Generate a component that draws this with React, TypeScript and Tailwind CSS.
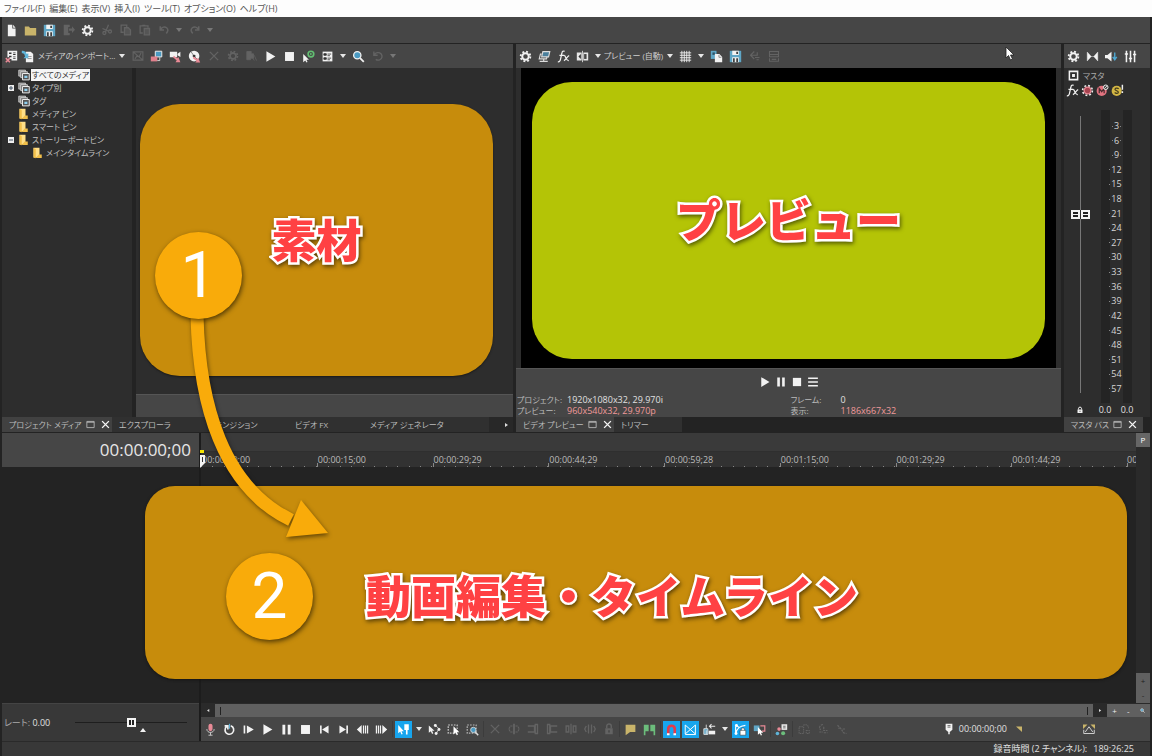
import { useState, type ReactNode } from "react";
import clsx from "clsx";

const ICONS: Record<string, ReactNode> = {
  file: <path d="M3.500 1H9v4.500h4V15H3.500zM10 1l3 3.500h-3z" fill="currentColor" />,
  folderOpen: <path d="M1 3h5l1.500 2H15v9H1z" fill="#c9b46a" />,
  save: (
    <>
      <path d="M1 1h14v14H1z" fill="#5fa6c6" />
      <path d="M4 1h8v5H4zM4 9h8v6H4z" fill="#f2f2f2" />
      <path d="M9 2h2v3H9zM5 10h2v5H5zM9 10h2v5H9z" fill="#333" />
    </>
  ),
  render: <path d="M1 1h8v3H7v8h2v3H1zM8 6h4V3l4 4.500-4 4.500V9H8z" fill="currentColor" />,
  gear: (
    <g fill="none" stroke="currentColor">
      <circle cx="8" cy="8" r="4" strokeWidth="2.400" />
      <circle cx="8" cy="8" r="6" strokeWidth="2.200" strokeDasharray="2.350 2.362" />
    </g>
  ),
  cut: (
    <g fill="none" stroke="currentColor" strokeWidth="1.700">
      <circle cx="4.500" cy="12" r="2" />
      <circle cx="12" cy="10" r="2" />
      <path d="M10 1 6 10.500M2 6l8 3.500" />
    </g>
  ),
  copy: (
    <g fill="none" stroke="currentColor" strokeWidth="1.700">
      <path d="M5 11H1.500V1.500H9V4" />
      <path d="M6 5h5l3 3v6.500H6z" fill="currentColor" fillOpacity=".5" />
    </g>
  ),
  paste: (
    <g fill="none" stroke="currentColor" strokeWidth="1.700">
      <path d="M5 12H1.500V2.500H12V5M4.500 2h4" />
      <path d="M7 6h7v8.500H7z" fill="currentColor" fillOpacity=".5" />
    </g>
  ),
  undo: <path d="M3 3v5h5M3.500 7.500C5 4 9 3 11.500 5c2.500 2 2 5-.500 7.500" fill="none" stroke="currentColor" strokeWidth="2" />,
  redo: <path d="M13 3v5H8M12.500 7.500C11 4 7 3 4.500 5c-2.500 2-2 5 .500 7.500" fill="none" stroke="currentColor" strokeWidth="2" />,
  rotate: <path d="M2.500 2v5h5M3 6.500C5 3 9.500 2.500 12 5c2.500 3 1.500 6.500-1.500 8-2 1-4 .500-5.500-.500" fill="none" stroke="currentColor" strokeWidth="1.800" />,
  binGrid: (
    <>
      <path d="M3 1h12v12H8v-2H6V9H3z" fill="#f2f2f2" />
      <path d="M5 3h3v2H5zM10 3h3v1h-3zM10 5h3v1h-3zM5 7h3v2H5zM10 8h3v1h-3zM10 10h3v1h-3z" fill="#333" />
      <path d="m1 10 5 5M6 10l-5 5" stroke="#e98a96" strokeWidth="1.800" />
    </>
  ),
  importMedia: (
    <>
      <path d="M6 2h6l3 3v10H6z" fill="#f2f2f2" />
      <path d="M8 8h5M8 10.500h5" stroke="#888" />
      <path d="M1 1c4 0 5 1 6 4l2-1v6H3l2-2C4 4 3 4 1 4z" fill="#5fb4d8" />
    </>
  ),
  noImage: <path d="M1.500 2.500h13v11h-13zM1.500 2.500l13 11M4 12l3-5M9 10l3-6" fill="none" stroke="currentColor" strokeWidth="1.500" />,
  capture: (
    <>
      <path d="M6.500 1.500h8v7h-8z" fill="#4a9ac2" stroke="#eee" strokeWidth="1.200" />
      <path d="M1 8h8v6H1z" fill="#e0808c" />
      <path d="M12 9v4h-3" fill="none" stroke="#eee" />
    </>
  ),
  camera: (
    <>
      <path d="M1 2h9v7H1zM10.500 4.500 14 2v6.500l-3.500-2z" fill="#f2f2f2" />
      <path d="m6 7 4 3 1.500-1.500L14 15H8l1.500-2L5 9z" fill="#e98a96" />
    </>
  ),
  disc: (
    <>
      <circle cx="7.500" cy="7.500" r="6.500" fill="#f2f2f2" />
      <path d="M7.500 7.500 4 2.500M7.500 7.500 12 12" stroke="#666" />
      <circle cx="7.500" cy="7.500" r="1.800" fill="#333" />
      <path d="m7 8 4 3 1.500-1.500L15 15.500H9l1.500-2L6 10z" fill="#e98a96" />
    </>
  ),
  x: <path d="m2.500 2.500 11 11M13.500 2.500l-11 11" stroke="currentColor" strokeWidth="1.800" />,
  bin: <path d="M1 2h6v3h3v6H6v2H1zM8 9l3 5M11 7l3 7" fill="currentColor" stroke="currentColor" />,
  play: <path d="M3 1.500 14 8 3 14.500z" fill="currentColor" />,
  stop: <path d="M2.500 2.500h11v11h-11z" fill="currentColor" />,
  pause: <path d="M3 2h3.500v12H3zM9.500 2H13v12H9.500z" fill="currentColor" />,
  autoPreview: (
    <>
      <path d="M1.500 5v10l2.500-2.200L5.500 15.500l1.300-.800L5.500 12h3z" fill="#f2f2f2" />
      <circle cx="11" cy="5" r="3.500" fill="none" stroke="#62bf72" strokeWidth="2" />
      <path d="m10 3.500 3 1.500-3 1.500z" fill="#62bf72" />
    </>
  ),
  views: (
    <>
      <path d="M2 2h12v12H2z" fill="#f2f2f2" />
      <path d="M3.500 4.500h3v2h-3zM8 5h4.500M8 7h3M3.500 9.500h3v2h-3zM8 10h4.500M8 12h3" fill="#333" stroke="#333" />
    </>
  ),
  search: (
    <>
      <path d="m10 10 4.500 4.500" stroke="#f2f2f2" strokeWidth="2.200" />
      <circle cx="6.500" cy="6.500" r="4.500" fill="#4a9ac2" stroke="#f2f2f2" strokeWidth="1.600" />
    </>
  ),
  external: (
    <g fill="none" stroke="#dcdcdc" strokeWidth="1.400">
      <path d="M6 2h8.500L13 8.500H4.500z" fill="#4a7f9c" />
      <path d="M4.500 5H3l-1.500 6h9l.500-2.500M2 14h10M7 11v3" />
    </g>
  ),
  fx: <path d="M1 14.500c2 .500 3-1 3.500-4L6 4c.500-2.500 1.500-3 3.500-2.500M3 6.500h6M9 7c2 0 2 6.500 5.500 6M15 7c-2 .500-4 5-6.500 6" fill="none" stroke="currentColor" strokeWidth="1.500" />,
  split: (
    <>
      <path d="M1 3h6v10H1zM9 3h6v10H9z" fill="#e6e6e6" />
      <path d="M6 5 3 8l3 3z" fill="#333" />
      <path d="M10 5v6h3V5z" fill="#444" />
      <path d="M8 1v14" stroke="#e6e6e6" />
    </>
  ),
  grid: <path d="M3.500 1v14M6.500 1v14M9.500 1v14M12.500 1v14M1 3.500h14M1 6.500h14M1 9.500h14M1 12.500h14" stroke="currentColor" strokeWidth="1.100" />,
  snapshot: (
    <>
      <path d="M1 1h7v10H1z" fill="#5fa6c6" />
      <path d="M3 3h3v3H3z" fill="#2f5366" />
      <path d="M6 5h5.500L15 8.500V15H6z" fill="#f2f2f2" />
      <path d="M11 6v3h3" fill="none" stroke="#777" />
    </>
  ),
  dimArrow: <path d="M7 2 2 7l5 5M3 7h8V3M8 10h6M10 13h3" fill="none" stroke="currentColor" strokeWidth="1.500" />,
  dimBox: <path d="M2 2h12v7H2zM2 6h12M2 11v4h12v-4M5 12.500h6" fill="none" stroke="currentColor" strokeWidth="1.400" />,
  lines: <path d="M1.500 3h13M1.500 8h13M1.500 13h13" stroke="currentColor" strokeWidth="2" />,
  downmix: <path d="M1.500 2.500l5 5.500-5 5.500zM14.500 2.500 9.500 8l5 5.500zM5 8h6" fill="currentColor" stroke="currentColor" strokeWidth=".5" />,
  dim: (
    <>
      <path d="M0 6h3l5-4v12l-5-4H0z" fill="#f2f2f2" />
      <path d="M12 3v8M9.500 8.500 12 12l2.500-3.500" fill="none" stroke="#4fa8d2" strokeWidth="1.700" />
    </>
  ),
  mixer: <path d="M3 1v14M8 1v14M13 1v14M1 5h4M6 10.500h4M11 5.500h4" stroke="currentColor" strokeWidth="1.900" />,
  target: <path d="M2 2h12v12H2zM7 7h2v2H7z" fill="none" stroke="currentColor" strokeWidth="2.200" />,
  autoRed: (
    <>
      <circle cx="8" cy="8" r="6" fill="none" stroke="#eee" strokeWidth="2" strokeDasharray="2.350 2.362" />
      <circle cx="8" cy="8" r="4.200" fill="#a84450" stroke="#e98a96" strokeWidth="1.500" />
    </>
  ),
  mute: (
    <>
      <circle cx="7" cy="8.500" r="6.200" fill="#e27480" />
      <path d="M4 11.500v-6l3 4 3-4v6" fill="none" stroke="#4a2b2e" strokeWidth="1.500" />
      <circle cx="12" cy="4" r="2.800" fill="#444" stroke="#eee" strokeWidth="1.200" />
      <path d="m10.500 5.500 3-3" stroke="#eee" />
    </>
  ),
  solo: (
    <>
      <circle cx="7" cy="8.500" r="6.200" fill="#d2b544" />
      <path d="M9.500 6C8 4.500 4.500 5 5 7c.300 1.500 4 1.200 4 3s-3 2-4.500.500" fill="none" stroke="#443c1c" strokeWidth="1.500" />
      <path d="M14 1v6M14 9v2" stroke="#eee" strokeWidth="1.800" />
    </>
  ),
  mic: (
    <>
      <rect x="5.500" y="1" width="5" height="9" rx="2.500" fill="#e98a96" />
      <path d="M3.500 7.500c0 5.500 9 5.500 9 0M8 11.500V15M5.500 15h5" fill="none" stroke="#c9c9c9" strokeWidth="1.200" />
    </>
  ),
  loop: (
    <>
      <path d="M5 4c-3.500 2-3.500 8 1 9.500 4.500 1.500 8-2.500 7-6.500C12.500 5 11 4 9.500 3.500M2 3.500h4V8" fill="none" stroke="#f2f2f2" strokeWidth="2" />
      <path d="M8 1v6" stroke="#5fb4d8" strokeWidth="1.500" />
    </>
  ),
  playStart: <path d="M2 3h2v10H2zM6 3 14.500 8 6 13z" fill="currentColor" />,
  prev: <path d="M2.500 3h2v10h-2zM13 3v10L5 8z" fill="currentColor" />,
  next: <path d="M11.500 3h2v10h-2zM3 3v10l8-5z" fill="currentColor" />,
  frameBack: <path d="M7 2.500v11L1 8zM8.500 3H10v10H8.500zM11 3h1.500v10H11zM13.500 3H15v10h-1.500z" fill="currentColor" />,
  frameNext: <path d="M9 2.500v11L15 8zM6 3h1.500v10H6zM3.500 3H5v10H3.500zM1 3h1.500v10H1z" fill="currentColor" />,
  editTool: (
    <>
      <path d="M1.500 2.500v10l2.500-2 1.500 3.500 1.500-.500-1.500-3.500H8.500z" fill="#fff" />
      <path d="M9 1.500h5.500v7H13V14h-2V8.500H9z" fill="#fff" />
    </>
  ),
  envelope: (
    <>
      <path d="M1 3v9l2.500-2L5 13.500l1.500-.800L5 9.500h3z" fill="#f2f2f2" />
      <path d="m9 3 4.500 4-3.500 6" fill="none" stroke="#ddd" />
      <circle cx="9" cy="3" r="1.800" fill="#f2f2f2" />
      <circle cx="13.500" cy="8" r="1.800" fill="#f2f2f2" />
      <circle cx="10" cy="13" r="1.800" fill="#f2f2f2" />
    </>
  ),
  selection: (
    <>
      <path d="M1.500 2.500h11v10h-11z" fill="none" stroke="#d0d0d0" strokeWidth="1.400" strokeDasharray="2 1.500" />
      <path d="M8 4v10l2.500-2.200L12 15l1.500-.700-1.400-3h3z" fill="#fff" />
    </>
  ),
  zoomTool: (
    <>
      <path d="M1.500 2.500h11v10h-11z" fill="none" stroke="#b8b8b8" strokeWidth="1.400" strokeDasharray="2 1.500" />
      <circle cx="9" cy="8.500" r="3.300" fill="#4a9ac2" stroke="#ddd" />
      <path d="m11.500 11 3.500 4" stroke="#ddd" strokeWidth="1.800" />
    </>
  ),
  trim: (
    <>
      <path d="M6 4H3L1 8l2 4h3M10 4h3l2 4-2 4h-3" fill="none" stroke="currentColor" strokeWidth="1.500" strokeDasharray="3 1" />
      <path d="M8 1v14" stroke="currentColor" strokeWidth="2.500" />
    </>
  ),
  trimStart: <path d="M1 4h9v8H1M11 2h3v12h-3z" fill="none" stroke="currentColor" strokeWidth="1.800" />,
  trimEnd: <path d="M15 4H6v8h9M2 2h3v12H2z" fill="none" stroke="currentColor" strokeWidth="1.800" />,
  splitDim: <path d="M8 1v14M5 4H1.500v8H5zM11 4h3.500v8H11z" fill="none" stroke="currentColor" strokeWidth="1.800" />,
  slip: <path d="M6 2v12M10 2v12M3 4 1 8l2 4M13 4l2 4-2 4" fill="none" stroke="currentColor" strokeWidth="1.800" />,
  lock: (
    <>
      <path d="M5 7V4c0-3.500 6-3.500 6 0v3" fill="none" stroke="currentColor" strokeWidth="1.900" />
      <path d="M3 7h10v8H3z" fill="currentColor" />
      <path d="M8 9.500v3" stroke="#464646" strokeWidth="2" />
    </>
  ),
  lockFull: (
    <>
      <path d="M5 7V4.500c0-3 6-3 6 0V7" fill="none" stroke="#f2f2f2" strokeWidth="2" />
      <path d="M3 7h10v7H3z" fill="#f2f2f2" />
      <path d="M8 9.500v2.500" stroke="#333" strokeWidth="1.500" />
    </>
  ),
  marker: <path d="M2 2h12v9H7.500L2 15z" fill="#c9b46a" />,
  region: <path d="M1 2h6v8H3v5H1zM9 2h6v13h-2v-5H9z" fill="#6cbd7c" />,
  magnet: (
    <>
      <path d="M4 14V7.500c0-5.500 8-5.500 8 0V14" fill="none" stroke="#e23b4a" strokeWidth="3.200" />
      <path d="M2.400 12.500h3.200V15H2.400zM10.400 12.500h3.200V15h-3.200z" fill="#fff" />
    </>
  ),
  crossfade: <path d="M1.500 2.500v11L14 2.500v11L1.500 2.500M1.500 14.200h13" fill="none" stroke="#fff" strokeWidth="1.200" />,
  ripple: (
    <>
      <path d="M4 2v5M4 9v5M1 7h5v7H1z" fill="#5fa6c6" stroke="#eee" />
      <path d="M7 9.500h8V14H7z" fill="#f2f2f2" />
      <path d="M15 4H8M10.500 1.500 8 4l2.500 2.500" fill="none" stroke="#eee" strokeWidth="1.300" />
    </>
  ),
  lockEnv: (
    <>
      <path d="M2 13C4 6 7 4 14 3M3 3l4 3M2 4v9" fill="none" stroke="#fff" strokeWidth="1.400" />
      <circle cx="3" cy="3" r="1.800" fill="#fff" />
      <circle cx="2.500" cy="13" r="1.800" fill="#fff" />
      <path d="M7.500 9h7v6h-7zM9 9V7.500c0-2 4-2 4 0V9" fill="#fff" stroke="#333" strokeWidth=".7" />
    </>
  ),
  ignoreGroup: (
    <>
      <path d="M1 3h7v7H1z" fill="#5fa6c6" />
      <path d="M9 3.500h5.500V10H11" fill="none" stroke="#e98a96" strokeWidth="1.500" />
      <path d="M6 5v9.500l2.300-2L9.700 15.500l1.400-.700-1.300-2.800h2.700z" fill="#fff" />
    </>
  ),
  nodes: (
    <>
      <path d="M8 1.500h7v7H8z" fill="#e6e6e6" />
      <path d="M10 4h3M10 6h3" stroke="#555" />
      <circle cx="5" cy="7.500" r="2.200" fill="#e98a96" />
      <circle cx="3" cy="13" r="2.200" fill="#5fb4d8" />
      <circle cx="10" cy="12.500" r="2.500" fill="#6cbd7c" />
    </>
  ),
  dashed: <path d="M1.500 5h6v9h-6zM7 3c4-2 7 0 7 4M11 10h4v4h-4z" fill="none" stroke="currentColor" strokeWidth="1.400" strokeDasharray="2 1" />,
  dashed2: <path d="M8 2C3 3 2 7 5 9M3 12h5M9 5v5h5M9 13h5" fill="none" stroke="currentColor" strokeWidth="1.600" strokeDasharray="3 1" />,
  dashed3: <path d="m2 3 5 5 3 5 4 1M3 7h4M9 8h4" fill="none" stroke="currentColor" strokeWidth="1.600" strokeDasharray="3 1" />,
  cursorMark: (
    <>
      <path d="M3.500 1h9v8L9 12v3H7v-3L3.500 9z" fill="#f2f2f2" />
      <path d="M6 3.500h4M6 5.500h4" stroke="#444" />
    </>
  ),
  corner: <path d="M2 3h12v11z" fill="#c9b46a" />,
  cornerPair: (
    <>
      <path d="M0 2h6L0 8zM10 2h6v6z" fill="#c9b46a" />
      <path d="M1 9v5h14V9M3 12l5-7 5 7" fill="none" stroke="#ddd" strokeWidth="1.200" />
    </>
  ),
  mediaStack: (
    <>
      <path d="M1 1.500h9v8H1z" fill="#888" stroke="#ddd" />
      <path d="M3.500 3.500h9v8h-9z" fill="#777" stroke="#ddd" />
      <path d="M6 6h9v8.500H6z" fill="#555" stroke="#eee" strokeWidth="1.300" />
      <path d="M8.500 9h4v3h-4z" fill="#8fd0f0" />
    </>
  ),
  bookFolder: (
    <>
      <path d="M2 1h8v13H2z" fill="#ffdf88" />
      <path d="M2 1l3 2v12l-3-1zM9 10h4v4.500H5z" fill="#f1bf4a" />
    </>
  ),
  maximize: <path d="M1.500 2.500h13v11h-13zM1.500 4h13" fill="none" stroke="currentColor" strokeWidth="1.500" />,
  close: <path d="m2 2 12 12M14 2 2 14" stroke="#f5f5f5" strokeWidth="2.500" />,
};

function Icon({ name, className = "size-[14px]" }: { name: string; className?: string }) {
  return (
    <svg viewBox="0 0 16 16" className={clsx("shrink-0", className)} aria-hidden="true">
      {ICONS[name]}
    </svg>
  );
}

function Tool({ name, off, on }: { name: string; off?: boolean; on?: boolean }) {
  return (
    <button
      type="button"
      aria-label={name}
      disabled={off}
      className={clsx(
        "grid h-[19px] w-[19px] shrink-0 place-items-center",
        off ? "text-[#636363]" : "text-[#f2f2f2]",
        on && "border border-[#464646] bg-[#17a5ee]",
      )}
    >
      <Icon name={name} className={off ? "size-3" : "size-[13px]"} />
    </button>
  );
}

function Drop({ off }: { off?: boolean }) {
  return (
    <button type="button" aria-label="more" className="grid h-[19px] w-3 shrink-0 place-items-center">
      <svg viewBox="0 0 6 4" className={clsx("h-1 w-1.5", off ? "text-[#777]" : "text-[#e6e6e6]")}>
        <path d="M0 0h6L3 4z" fill="currentColor" />
      </svg>
    </button>
  );
}

// Toolbar entries: "-" is a dropdown arrow, "|" a separator, "!" dims, "*" highlights.
function Tools({ items }: { items: string[] }) {
  return (
    <>
      {items.map((item, i) => {
        if (item === "-") return <Drop key={i} />;
        if (item === "!-") return <Drop key={i} off />;
        if (item === "|") return <span key={i} className="flex h-4 w-[3px] shrink-0 justify-center"><span className="w-px bg-[#3c3c3c]" /></span>;
        if (item[0] === "!") return <Tool key={i} name={item.slice(1)} off />;
        if (item[0] === "*") return <Tool key={i} name={item.slice(1)} on />;
        return <Tool key={i} name={item} />;
      })}
    </>
  );
}

function Tab({ label, active, className }: { label: string; active?: boolean; className: string }) {
  return (
    <div className={clsx("flex h-full shrink-0 items-center gap-0.5 pl-[7px] text-[#bbb]", active ? "bg-[#414141]" : "bg-[#303030]", className)}>
      <button type="button" role="tab" aria-selected={!!active} className="whitespace-nowrap text-[8px]">
        {label}
      </button>
      {active && (
        <>
          <button type="button" aria-label="maximize" className="px-0.5"><Icon name="maximize" className="size-[9px]" /></button>
          <button type="button" aria-label="close" className="px-0.5"><Icon name="close" className="size-[9px]" /></button>
        </>
      )}
    </div>
  );
}

const CAPTION =
  "whitespace-nowrap font-black text-[#ff4143] text-[45px] leading-none [font-feature-settings:normal] [-webkit-text-stroke:5px_#fff] [paint-order:stroke_fill] [filter:drop-shadow(1px_2px_2px_rgba(0,0,0,0.55))]";

const MENUS = ["ファイル(F)", "編集(E)", "表示(V)", "挿入(I)", "ツール(T)", "オプション(O)", "ヘルプ(H)"];

const TREE = [
  { label: "すべてのメディア", icon: "mediaStack", selected: true },
  { label: "タイプ別", icon: "mediaStack", mark: "+" },
  { label: "タグ", icon: "mediaStack" },
  { label: "メディア ビン", icon: "bookFolder" },
  { label: "スマート ビン", icon: "bookFolder" },
  { label: "ストーリーボードビン", icon: "bookFolder", mark: "−" },
  { label: "メインタイムライン", icon: "bookFolder", nested: true },
];

const LEVELS = Array.from({ length: 19 }, (_, i) => (i + 1) * 3);

const TIMES = [
  "00:00:00;00", "00:00:15;00", "00:00:29;29", "00:00:44;29", "00:00:59;28",
  "00:01:15;00", "00:01:29;29", "00:01:44;29",
];

function MediaDock() {
  return (
    <section className="flex min-w-0 flex-[511] flex-col">
      <div className="flex h-6 items-center bg-[#464646]">
        <Tool name="binGrid" />
        <button type="button" className="flex h-[19px] w-[95px] items-center gap-1 whitespace-nowrap text-[8px] text-[#d0d0d0]">
          <Icon name="importMedia" className="size-[13px]" />
          メディアのインポート...
        </button>
        <Tools items={["-", "!noImage", "capture", "camera", "disc", "!x", "!gear", "!bin", "play", "stop", "autoPreview", "views", "-", "search", "!rotate", "!-"]} />
      </div>
      <div className="flex min-h-0 flex-1">
        <ul className="w-[130px] shrink-0 bg-[#2d2d2d] text-[8px] text-[#c0c0c0]">
          {TREE.map((node) => (
            <li key={node.label} className={clsx("flex h-[13px] items-center", node.nested ? "pl-5" : "pl-1.5")}>
              <span className="mr-1 grid size-[6px] place-items-center">
                {node.mark && (
                  <svg viewBox="0 0 6 6" className="size-1.5 bg-[#eee]">
                    <path d={node.mark === "+" ? "M1 3h4M3 1v4" : "M1 3h4"} stroke="#456" />
                  </svg>
                )}
              </span>
              <Icon name={node.icon} className="size-3" />
              <span className={clsx("ml-px whitespace-nowrap px-px leading-3", node.selected && "bg-[#f5f5f5] text-[#333]")}>
                {node.label}
              </span>
            </li>
          ))}
        </ul>
        <div className="flex flex-1 flex-col border-l-4 border-[#232323] bg-[#2d2d2d]">
          <div className="mt-9 mr-5 mb-[18px] ml-1 grid flex-1 place-items-center rounded-[40px] bg-[#c78c0c] shadow-[0_1px_2px_#1a1a1a]">
            <h2 className={CAPTION}>素材</h2>
          </div>
          <div className="h-[23px] border-t border-[#555] bg-[#464646]" />
        </div>
      </div>
      <div role="tablist" className="flex h-[15px] overflow-hidden bg-[#303030]">
        <Tab label="プロジェクト メディア" active className="w-[110px]" />
        <Tab label="エクスプローラ" className="w-[90px]" />
        <Tab label="トランジション" className="w-[86px]" />
        <Tab label="ビデオ FX" className="w-[75px]" />
        <Tab label="メディア ジェネレータ" className="w-[110px]" />
        <button type="button" aria-label="scroll tabs" className="ml-auto grid w-6 shrink-0 place-items-center bg-[#282828] pl-3">
          <svg viewBox="0 0 4 4" className="size-1"><path d="M0 0l3 2-3 2z" fill="#ddd" /></svg>
        </button>
      </div>
    </section>
  );
}

function PreviewDock() {
  return (
    <section className="flex min-w-0 flex-[545] flex-col">
      <div className="flex h-6 items-center bg-[#464646]">
        <Tools items={["gear", "external", "fx", "split", "-"]} />
        <button type="button" className="w-[60px] whitespace-nowrap text-left text-[8px] text-[#d0d0d0]">プレビュー (自動)</button>
        <Tools items={["-", "grid", "-", "snapshot", "save", "!dimArrow", "!dimBox"]} />
      </div>
      <div className="flex min-h-0 flex-1 bg-[#2d2d2d] px-[5px]">
        <div className="flex flex-1 bg-black px-[11px] pt-[14px] pb-[9px]">
          <div className="grid flex-1 place-items-center rounded-[40px] bg-[#b4c406]">
            <h2 className={CAPTION}>プレビュー</h2>
          </div>
        </div>
      </div>
      <div className="border-t border-[#555] bg-[#464646] pb-px text-[#f2f2f2]">
        <div className="flex h-[25px] items-center justify-center">
          {["play", "pause", "stop", "lines"].map((name) => (
            <button key={name} type="button" aria-label={name} className="grid w-4 place-items-center">
              <Icon name={name} className="size-3" />
            </button>
          ))}
        </div>
        <div className="grid grid-cols-2 whitespace-nowrap leading-[11px]">
          <dl className="grid grid-cols-[50px_1fr] pl-px">
            <dt className="text-[8px] text-[#bbb]">プロジェクト:</dt>
            <dd className="text-[#e0e0e0]">1920x1080x32, 29.970i</dd>
            <dt className="text-[8px] text-[#bbb]">プレビュー:</dt>
            <dd className="text-[#f09a9a]">960x540x32, 29.970p</dd>
          </dl>
          <dl className="grid grid-cols-[50px_1fr] pl-0.5">
            <dt className="text-[8px] text-[#bbb]">フレーム:</dt>
            <dd className="text-[#e0e0e0]">0</dd>
            <dt className="text-[8px] text-[#bbb]">表示:</dt>
            <dd className="text-[#f09a9a]">1186x667x32</dd>
          </dl>
        </div>
      </div>
      <div role="tablist" className="flex h-[15px] bg-[#232323]">
        <Tab label="ビデオ プレビュー" active className="w-[98px]" />
        <Tab label="トリマー" className="w-[68px]" />
      </div>
    </section>
  );
}

function MasterBus() {
  const [gain, setGain] = useState(65);
  return (
    <section className="flex w-[86px] shrink-0 flex-col bg-[#2d2d2d]">
      <div className="flex h-6 items-center bg-[#464646]">
        <Tools items={["gear", "downmix", "dim", "mixer"]} />
      </div>
      <div className="flex h-[15px] items-center gap-1 pl-1 text-[8px] text-[#aaa]">
        <Icon name="target" className="size-[11px] text-[#f2f2f2]" />
        マスタ
      </div>
      <div className="flex h-[15px] items-center gap-0.5 pl-0.5 text-[#f2f2f2]">
        {["fx", "autoRed", "mute", "solo"].map((name) => (
          <button key={name} type="button" aria-label={name}>
            <Icon name={name} className="size-[13px]" />
          </button>
        ))}
      </div>
      <div className="mt-3 flex min-h-0 flex-1 pl-1.5">
        <div className="relative mt-1.5 mb-2.5 flex w-5 justify-center">
          <span className="w-px bg-[#777]" />
          <input
            type="range"
            aria-label="master gain"
            value={gain}
            onChange={(e) => setGain(Number(e.target.value))}
            className="absolute inset-0 w-5 appearance-none bg-transparent [direction:rtl] [writing-mode:vertical-lr] [&::-webkit-slider-thumb]:h-[9px] [&::-webkit-slider-thumb]:w-[19px] [&::-webkit-slider-thumb]:appearance-none [&::-webkit-slider-thumb]:bg-[linear-gradient(90deg,#f5f5f5_2px,transparent_2px,transparent_7px,#f5f5f5_7px,#f5f5f5_9px,#2d2d2d_9px,#2d2d2d_10px,#f5f5f5_10px,#f5f5f5_12px,transparent_12px,transparent_17px,#f5f5f5_17px),linear-gradient(#f5f5f5_2px,#222_2px,#222_4px,#f5f5f5_4px,#f5f5f5_5px,#222_5px,#222_7px,#f5f5f5_7px)]"
          />
        </div>
        <div className="ml-[11px] w-[9px] bg-[#242424]" />
        <ol className="flex w-[13px] flex-col items-center justify-between pt-2.5 pb-2 leading-3 text-[#d6d6d6]">
          {LEVELS.map((db) => (
            <li key={db} className="flex items-center gap-px before:h-px before:w-px before:bg-[#888] after:h-px after:w-px after:bg-[#888]">
              {db}
            </li>
          ))}
        </ol>
        <div className="w-[9px] bg-[#242424]" />
      </div>
      <div className="flex h-[14px] items-center pl-3 text-[#e0e0e0]">
        <Icon name="lockFull" className="size-2" />
        <span className="ml-2.5 w-[22px] text-center">0.0</span>
        <span className="w-[22px] text-center">0.0</span>
      </div>
      <div role="tablist" className="flex h-[15px] bg-[#232323]">
        <Tab label="マスタ バス" active className="w-[79px]" />
      </div>
    </section>
  );
}

function Step({ n, className }: { n: number; className: string }) {
  return (
    <span
      className={clsx(
        "absolute z-20 grid size-[87px] place-items-center rounded-full bg-[#f9ab0a] font-['Roboto'] text-[64px] leading-none text-white shadow-[1px_2px_5px_rgba(0,0,0,0.6)]",
        className,
      )}
    >
      {n}
    </span>
  );
}

function Ticks() {
  return (
    <span className="flex h-1 items-end border-l border-[#888]">
      {Array.from({ length: 10 }, (_, i) => (
        <i key={i} className="h-px flex-1 border-r border-[#888]" />
      ))}
    </span>
  );
}

function Timeline() {
  const [rate, setRate] = useState(50);
  return (
    <section className="relative flex min-h-0 flex-[308] bg-[#232323]">
      <aside className="flex w-[199px] shrink-0 flex-col border-r-2 border-[#1c1c1c]">
        <output className="flex h-[34px] items-center justify-end bg-[#464646] pr-2 text-[17px] text-[#e6e6e6]">00:00:00;00</output>
        <div className="flex-1" />
        <div className="flex h-[38px] items-center border-t border-[#444] bg-[#383838] text-[#e0e0e0]">
          <label htmlFor="rate" className="w-[73px] whitespace-nowrap pl-0.5">
            <span className="text-[#aaa]">レート:</span> 0.00
          </label>
          <div className="relative">
            <input
              id="rate"
              type="range"
              value={rate}
              onChange={(e) => setRate(Number(e.target.value))}
              className="block h-[9px] w-28 appearance-none bg-[linear-gradient(#1e1e1e,#1e1e1e)] bg-[length:100%_1px] bg-center bg-no-repeat [&::-webkit-slider-thumb]:size-[9px] [&::-webkit-slider-thumb]:appearance-none [&::-webkit-slider-thumb]:border-2 [&::-webkit-slider-thumb]:border-[#f5f5f5] [&::-webkit-slider-thumb]:bg-[linear-gradient(90deg,#222_2px,#f5f5f5_2px,#f5f5f5_3px,#222_3px)]"
            />
            <svg viewBox="0 0 6 4" className="absolute top-[10px] left-[65px] h-1 w-1.5">
              <path d="M3 0l3 4H0z" fill="#f2f2f2" />
            </svg>
          </div>
        </div>
      </aside>

      <div className="flex min-w-0 flex-1 flex-col">
        <div className="flex min-h-0 flex-1">
          <div className="min-w-0 flex-1">
            <div className="h-[19px] border-b border-[#2f2f2f] bg-[#3a3a3a]" />
            <div className="flex h-[15px] bg-[#323232] text-[#bbb]">
              {TIMES.map((time) => (
                <div key={time} className="flex w-[12.38%] shrink-0 flex-col">
                  <span className="h-[11px] pl-px leading-[15px]">{time}</span>
                  <Ticks />
                </div>
              ))}
              <div className="flex flex-col">
                <span className="h-[11px] leading-[15px]">00</span>
                <span className="h-1 border-l border-[#888]" />
              </div>
            </div>
          </div>
          <div className="flex w-[14px] flex-col bg-[#2a2a2a]">
            <button type="button" className="h-[14px] bg-[#666] text-[8px] leading-none text-white">P</button>
            <div className="flex-1" />
            <div className="flex h-[30px] flex-col items-center justify-between bg-[#606060] py-1 text-[8px] leading-2 text-[#222]">
              <span>+</span>
              <span>-</span>
            </div>
          </div>
        </div>
        <div className="flex h-[14px] border-t border-[#2a2a2a] bg-[#606060]">
          <button type="button" aria-label="scroll left" className="grid w-[14px] place-items-center bg-[#2a2a2a]">
            <svg viewBox="0 0 4 4" className="size-[3px]"><path d="M3 0L0 2l3 2z" fill="#ddd" /></svg>
          </button>
          <div className="flex flex-1 items-center justify-between px-[5px]">
            <span className="h-2 w-px bg-[#222]" />
            <span className="h-2 w-px bg-[#222]" />
          </div>
          <button type="button" aria-label="scroll right" className="grid w-[14px] place-items-center bg-[#2a2a2a]">
            <svg viewBox="0 0 4 4" className="size-[3px]"><path d="M0 0l3 2-3 2z" fill="#ddd" /></svg>
          </button>
          <div className="flex w-[43px] items-center justify-around text-[8px] text-[#eee]">
            <button type="button">+</button>
            <button type="button">-</button>
            <button type="button" aria-label="zoom"><Icon name="search" className="size-[5px]" /></button>
          </div>
        </div>
        <div className="flex h-[24px] items-center bg-[#464646]">
          <Tools
            items={[
              "mic", "loop", "playStart", "play", "pause", "stop", "prev", "next", "frameBack", "frameNext", "|",
              "*editTool", "-", "envelope", "selection", "zoomTool", "|",
              "!x", "!trim", "!trimStart", "!trimEnd", "!splitDim", "!slip", "!lock", "|",
              "marker", "region", "|", "*magnet", "*crossfade", "ripple", "-", "*lockEnv", "ignoreGroup", "|",
              "nodes", "|", "!dashed", "!dashed2", "!dashed3",
            ]}
          />
          <div className="ml-auto flex items-center gap-1 pr-[55px] text-[#e0e0e0]">
            <Icon name="cursorMark" className="size-3" />
            <span>00:00:00;00</span>
            <Icon name="corner" className="ml-1 size-2" />
            <Icon name="cornerPair" className="ml-14 size-3" />
          </div>
        </div>
      </div>

      <svg viewBox="0 0 6 18" className="absolute top-[17px] left-[198px] h-[18px] w-1.5">
        <path d="M0 0h4v3H0z" fill="#f4e400" />
        <path d="M0 5h5v8l-5 5z" fill="#f2f2f2" />
        <path d="M2.500 7v5" stroke="#333" />
      </svg>

      <div className="absolute top-[53px] right-[23px] bottom-[62px] left-[143px] z-10 grid place-items-center rounded-[30px] bg-[#c78c0c] shadow-[0_1px_3px_#151515]">
        <h2 className={clsx(CAPTION, "pt-7 pr-12")}>動画編集・タイムライン</h2>
      </div>
      <Step n={2} className="top-[120px] left-[224px]" />
    </section>
  );
}

export default function App() {
  return (
    <div className="relative flex h-screen flex-col overflow-hidden bg-[#232323] font-['Open_Sans','Noto_Sans_CJK_JP',sans-serif] text-[9px] leading-3 [font-feature-settings:'palt']">
      <nav className="flex h-[17px] shrink-0 items-center gap-1 bg-[#fdfdfd] pl-1 text-[#555]">
        {MENUS.map((menu) => (
          <button key={menu} type="button" className="whitespace-nowrap">{menu}</button>
        ))}
      </nav>
      <div className="flex min-h-0 flex-1 flex-col px-0.5">
        <div className="flex h-[26px] shrink-0 items-center bg-[#464646]">
          <Tools items={["file", "folderOpen", "save", "!render", "gear", "!cut", "!copy", "!paste", "!undo", "!-", "!redo", "!-"]} />
        </div>
        <main className="flex min-h-0 flex-1 flex-col gap-px pt-px">
          <div className="flex min-h-0 flex-[388] gap-[3px]">
            <MediaDock />
            <PreviewDock />
            <MasterBus />
          </div>
          <Timeline />
        </main>
        <footer className="flex h-[15px] shrink-0 items-center justify-end gap-1.5 border-t border-[#2a2a2a] bg-[#383838] pr-4 text-[#e0e0e0]">
          <span>録音時間 (2 チャンネル):</span>
          <span>189:26:25</span>
        </footer>
      </div>

      <svg viewBox="0 0 150 230" className="absolute top-[315px] left-[185px] z-20 h-[230px] w-[150px] drop-shadow-[1px_2px_2px_rgba(0,0,0,0.5)]">
        <path d="M12 0C14 90 38 172 106 205" fill="none" stroke="#f9ab0a" strokeWidth="13" />
        <path d="M116 185l27 33-42 4z" fill="#f9ab0a" />
      </svg>
      <Step n={1} className="top-[232px] left-[155px]" />
      <svg viewBox="0 0 10 15" className="absolute top-[46px] left-[1005px] h-[15px] w-2.5">
        <path d="M1 1v11l2.500-2.500L5.500 14l2-1-2-4H9z" fill="#fff" stroke="#222" strokeWidth=".8" />
      </svg>
    </div>
  );
}
